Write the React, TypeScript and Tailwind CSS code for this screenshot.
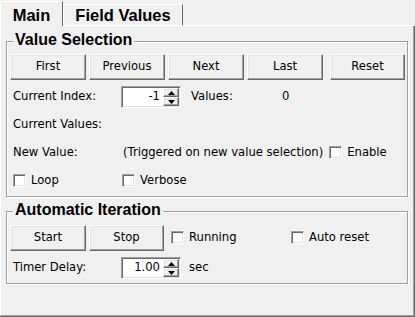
import type { ReactNode } from 'react'

const raised =
  'border border-t-white border-l-white border-r-[#696969] border-b-[#696969] shadow-[inset_-1px_-1px_0_#a0a0a0,inset_1px_1px_0_#e3e3e3]'
const sunken =
  'border border-t-[#a0a0a0] border-l-[#a0a0a0] border-r-white border-b-white shadow-[inset_1px_1px_0_#696969,inset_-1px_-1px_0_#e3e3e3]'

function Button({ label, width = 'w-[76px]' }: { label: string; width?: string }) {
  return (
    <button className={`${raised} ${width} h-[26px] shrink-0 bg-[#f0f0f0] text-black`}>
      {label}
    </button>
  )
}

function Check({ label, className = '' }: { label: string; className?: string }) {
  return (
    <label className={`flex items-center gap-[5px] ${className}`}>
      <span className={`${sunken} h-[13px] w-[13px] shrink-0 bg-white`} />
      <span>{label}</span>
    </label>
  )
}

function Arrow({ up }: { up?: boolean }) {
  return (
    <div className={`${raised} flex flex-1 items-center justify-center bg-[#f0f0f0]`}>
      <svg width="7" height="4" viewBox="0 0 7 4">
        <path d={up ? 'M0 4 L3.5 0 L7 4 Z' : 'M0 0 L3.5 4 L7 0 Z'} fill="#000" />
      </svg>
    </div>
  )
}

function SpinBox({ value }: { value: string }) {
  return (
    <div className={`${sunken} flex h-[22px] w-[60px] shrink-0 bg-white`}>
      <div className="flex flex-1 items-center justify-end pr-[3px]">{value}</div>
      <div className="flex w-[17px] flex-col py-[1px] pr-[1px]">
        <Arrow up />
        <Arrow />
      </div>
    </div>
  )
}

function Group({ title, className = '', children }: { title: string; className?: string; children: ReactNode }) {
  return (
    <div
      className={`relative mx-[5px] border border-[#a0a0a0] shadow-[inset_1px_1px_0_#fff,1px_1px_0_#fff] ${className}`}
    >
      <span className="absolute -top-[11px] left-[6px] bg-[#f0f0f0] px-[2px] font-['Liberation_Sans',sans-serif] text-[16px] leading-[18px] font-bold">
        {title}
      </span>
      {children}
    </div>
  )
}

const Label = ({ children }: { children: ReactNode }) => (
  <span className="w-[111px] shrink-0 pl-[3px]">{children}</span>
)

export default function App() {
  return (
    <div className="h-[317px] w-[415px] overflow-hidden bg-[#f0f0f0] font-['DejaVu_Sans',sans-serif] text-[11.6px] text-black">
      {/* tabs */}
      <div className="flex h-[26px] items-end font-['Liberation_Sans',sans-serif] text-[16.5px] font-bold">
        <div className="flex h-[25px] w-[63px] items-center justify-center border-t border-r border-l border-t-white border-r-[#696969] border-l-white pt-[3px]">
          Main
        </div>
        <div className="flex h-[22px] w-[120px] items-center justify-center border-t border-r border-b border-l border-t-white border-r-[#696969] border-b-white border-l-white pt-[1px]">
          Field Values
        </div>
        <div className="mr-[2px] h-px flex-1 bg-white" />
      </div>

      {/* pane */}
      <div className="h-[291px] border-r border-b border-r-[#696969] border-b-[#696969]">
        <div className="h-full border-r border-b border-l border-r-[#a0a0a0] border-b-[#a0a0a0] border-l-white pt-[15px]">
          <Group title="Value Selection" className="px-[3px] pt-[12px] pb-[4px]">
            <div className="flex h-[26px]">
              <Button label="First" />
              <div className="ml-[3px]">
                <Button label="Previous" />
              </div>
              <div className="ml-[3px]">
                <Button label="Next" />
              </div>
              <div className="ml-[3px]">
                <Button label="Last" />
              </div>
              <div className="ml-[7px]">
                <Button label="Reset" width="w-[75px]" />
              </div>
            </div>
            <div className="mt-[6px] flex h-[22px] items-center">
              <Label>Current Index:</Label>
              <SpinBox value="-1" />
              <span className="ml-[10px] w-[91px]">Values:</span>
              <span>0</span>
            </div>
            <div className="mt-[6px] flex h-[22px] items-center">
              <Label>Current Values:</Label>
            </div>
            <div className="mt-[6px] flex h-[22px] items-center">
              <Label>New Value:</Label>
              <span className="pl-[2px]">(Triggered on new value selection)</span>
              <Check label="Enable" className="ml-[6px]" />
            </div>
            <div className="mt-[6px] flex h-[22px] items-center">
              <div className="w-[111px] shrink-0 pl-[3px]">
                <Check label="Loop" />
              </div>
              <Check label="Verbose" className="pl-[1px]" />
            </div>
          </Group>

          <Group title="Automatic Iteration" className="mt-[14px] px-[3px] pt-[13px] pb-[4px]">
            <div className="flex h-[26px] items-center">
              <Button label="Start" />
              <div className="ml-[3px]">
                <Button label="Stop" width="w-[75px]" />
              </div>
              <Check label="Running" className="ml-[7px] w-[120px]" />
              <Check label="Auto reset" />
            </div>
            <div className="mt-[6px] flex h-[22px] items-center">
              <Label>Timer Delay:</Label>
              <SpinBox value="1.00" />
              <span className="ml-[8px]">sec</span>
            </div>
          </Group>
        </div>
      </div>
    </div>
  )
}
